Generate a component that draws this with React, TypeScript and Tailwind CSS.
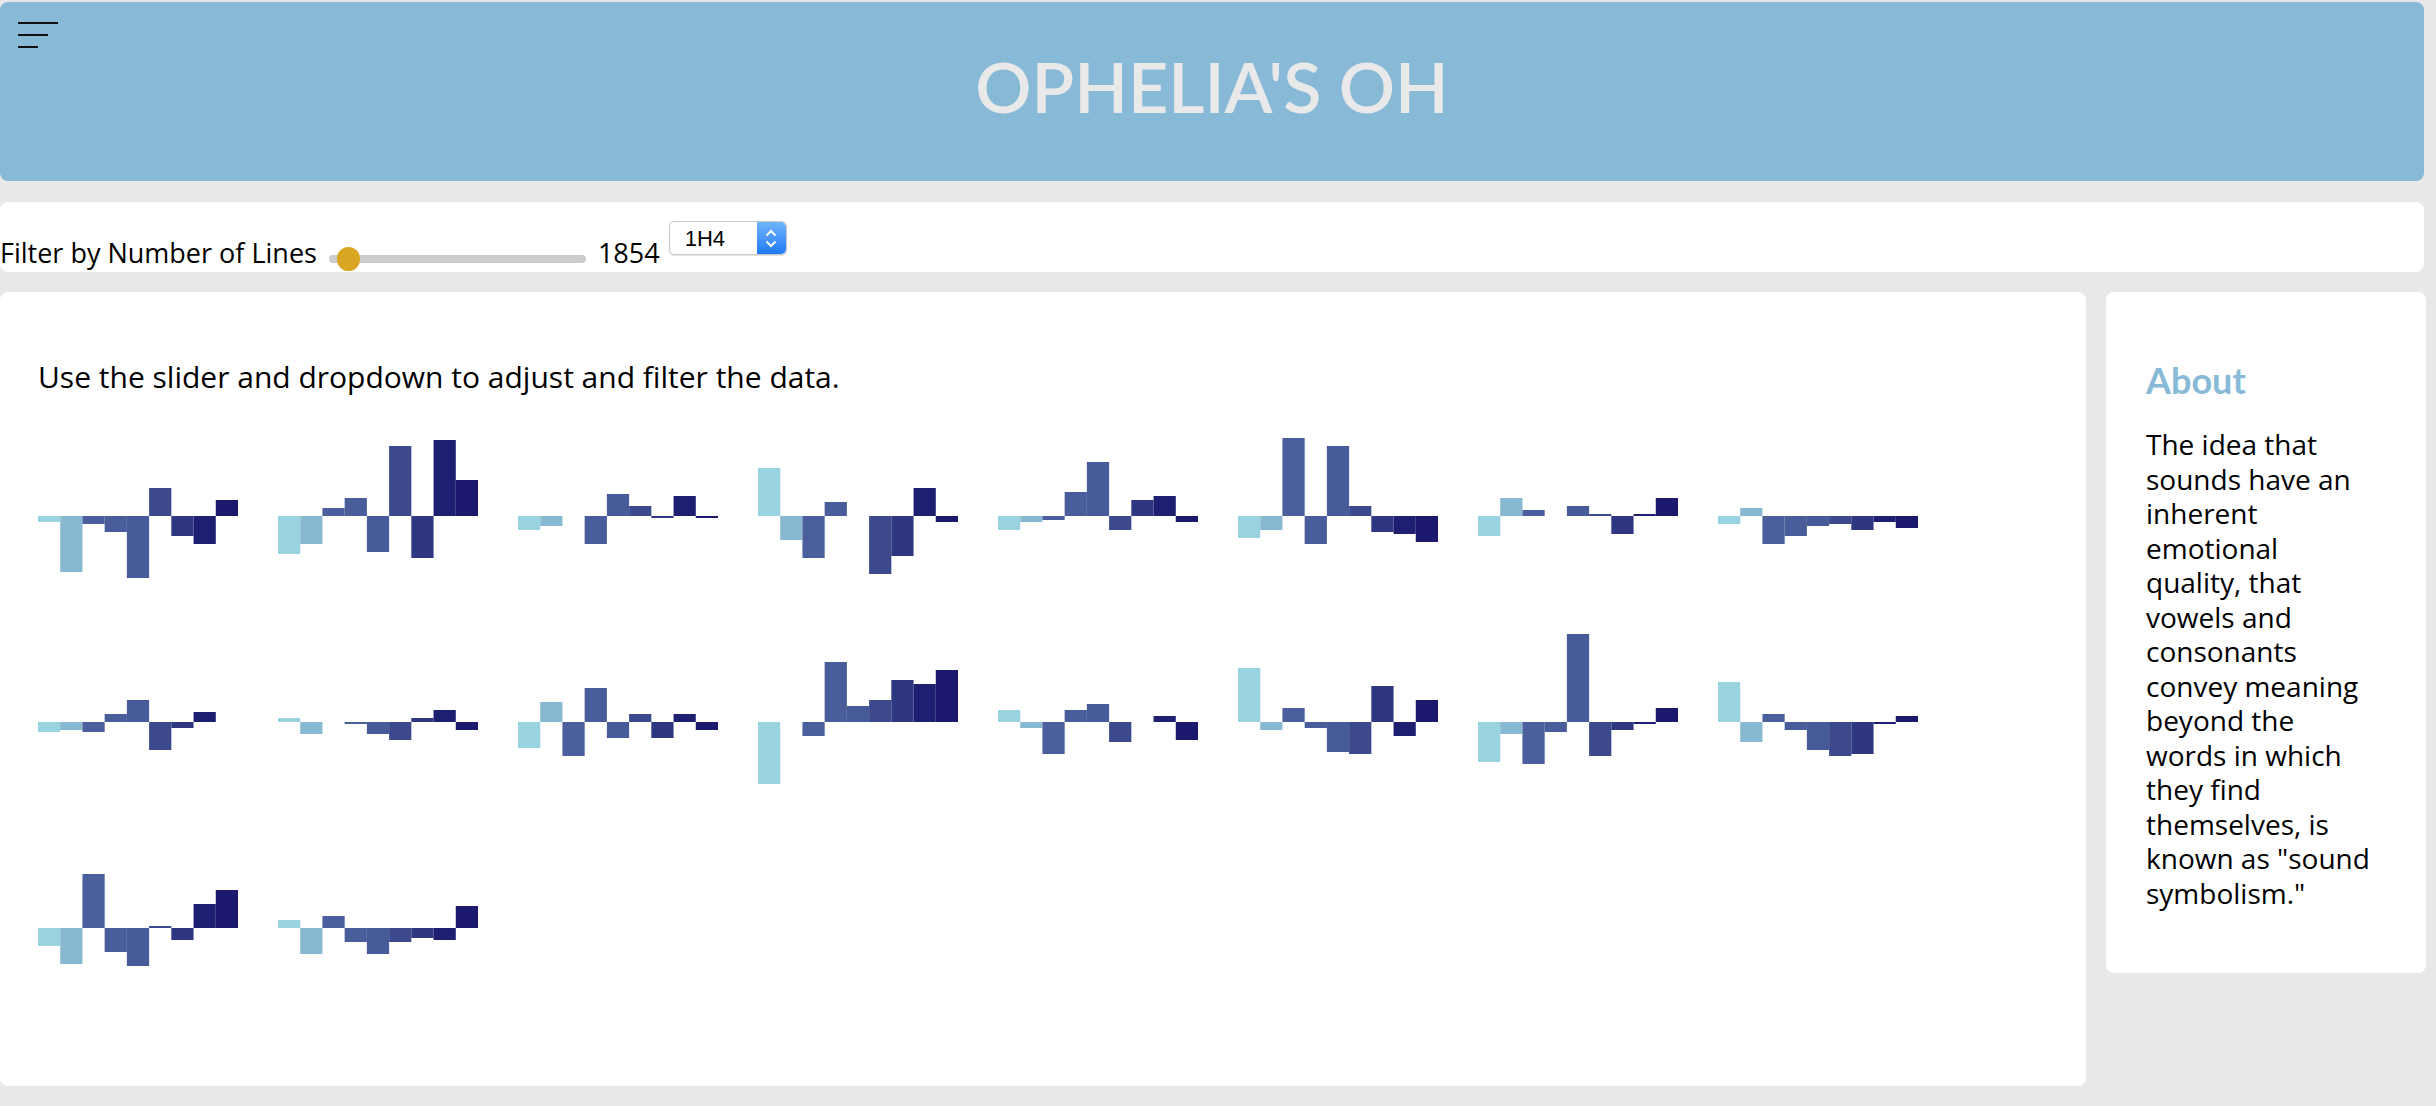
import React from 'react';

// bar heights in px, positive = above the zero line
const charts: number[][] = [
  [-6, -56, -8, -16, -62, 28, -20, -28, 16],
  [-38, -28, 8, 18, -36, 70, -42, 76, 36],
  [-14, -10, 0, -28, 22, 10, -2, 20, -2],
  [48, -24, -42, 14, 0, -58, -40, 28, -6],
  [-14, -6, -4, 24, 54, -14, 16, 20, -6],
  [-22, -14, 78, -28, 70, 10, -16, -18, -26],
  [-20, 18, 6, 0, 10, 2, -18, 2, 18],
  [-8, 8, -28, -20, -10, -8, -14, -6, -12],
  [-10, -8, -10, 8, 22, -28, -6, 10, 0],
  [4, -12, 0, -2, -12, -18, 4, 12, -8],
  [-26, 20, -34, 34, -16, 8, -16, 8, -8],
  [-62, 0, -14, 60, 16, 22, 42, 38, 52],
  [12, -6, -32, 12, 18, -20, 0, 6, -18],
  [54, -8, 14, -6, -30, -32, 36, -14, 22],
  [-40, -12, -42, -10, 88, -34, -8, -2, 14],
  [40, -20, 8, -8, -28, -34, -32, -2, 6],
  [-18, -36, 54, -24, -38, 2, -12, 24, 38],
  [8, -26, 12, -14, -26, -14, -10, -12, 22],
];

const colors = ['#99d3df', '#88b8d2', '#4a5f9b', '#485d99', '#475b98', '#3c4a8b', '#2f3783', '#1f1f72', '#1b186e'];

const BarChart = ({ values }: { values: number[] }) => {
  const w = 200 / values.length;
  return (
    <svg width={200} height={200} className="block">
      {values.map((v, i) => (
        <rect
          key={i}
          x={i * w}
          y={v > 0 ? 100 - v : 100}
          width={w}
          height={Math.abs(v)}
          fill={colors[i]}
        />
      ))}
    </svg>
  );
};

const SelectArrows = () => (
  <div className="flex h-full w-[29px] flex-col items-center justify-center gap-[3px] rounded-r-[5px] bg-gradient-to-b from-[#6fb4fb] to-[#1c7af5]">
    <svg width="12" height="8" viewBox="0 0 12 8" fill="none" stroke="white" strokeWidth="2">
      <path d="M1.5 6.5 L6 2 L10.5 6.5" />
    </svg>
    <svg width="12" height="8" viewBox="0 0 12 8" fill="none" stroke="white" strokeWidth="2">
      <path d="M1.5 1.5 L6 6 L10.5 1.5" />
    </svg>
  </div>
);

export default function App() {
  return (
    <div className="min-h-screen bg-[#e8e8e8] pt-[2px] pr-[10px] font-[family-name:'Open_Sans',sans-serif] text-black">
      <header className="relative mr-[2px] flex h-[179px] items-center justify-center rounded-[8px] bg-[#88bad7]">
        <button className="absolute left-[18px] top-[20px] flex flex-col gap-[10px]">
          <span className="block h-[2px] w-[40px] bg-[#111]" />
          <span className="block h-[2px] w-[30px] bg-[#111]" />
          <span className="block h-[2px] w-[20px] bg-[#111]" />
        </button>
        <h1 className="mb-[11px] font-[family-name:Lato,sans-serif] text-[70px] font-semibold leading-none text-[#e9e9e9]">
          OPHELIA'S OH
        </h1>
      </header>

      <div className="mr-[2px] mt-[21px] flex h-[70px] items-end rounded-[8px] bg-white">
        <span className="mb-[4px] text-[27px] leading-[30px]">Filter by Number of Lines</span>
        <div className="relative mb-[1px] ml-[12px] flex h-[24px] w-[257px] items-center">
          <div className="h-[8px] w-full rounded-full bg-[#cccccc]" />
          <div className="absolute left-[8px] top-0 h-[24px] w-[23px] rounded-full bg-[#daa520]" />
        </div>
        <span className="mb-[4px] ml-[12px] text-[27px] leading-[30px]">1854</span>
        <div className="mb-[17px] ml-[9px] flex h-[34px] w-[118px] items-center rounded-[5px] border border-[#c9c9c9] bg-white shadow-[0_1px_1px_rgba(0,0,0,0.12)]">
          <span className="flex-1 pl-[15px] font-[family-name:'Liberation_Sans',sans-serif] text-[22px]">1H4</span>
          <SelectArrows />
        </div>
      </div>

      <div className="mt-[20px] flex items-start gap-[20px]">
        <main className="h-[794px] w-[2086px] shrink-0 rounded-[8px] bg-white pl-[38px] pr-[38px] pt-[65px]">
          <p className="text-[30px] leading-[40px]">Use the slider and dropdown to adjust and filter the data.</p>
          <div className="mt-[19px] flex flex-wrap gap-x-[40px] gap-y-[6px]">
            {charts.map((c, i) => (
              <BarChart key={i} values={c} />
            ))}
          </div>
        </main>

        <aside className="h-[681px] w-[320px] shrink-0 rounded-[8px] bg-white pl-[40px] pr-[50px] pt-[66px]">
          <h2 className="font-[family-name:Lato,sans-serif] text-[36px] font-bold leading-[44px] text-[#88bad7]">About</h2>
          <p className="mt-[25px] text-[28px] leading-[34.5px]">
            The idea that sounds have an inherent emotional quality, that vowels and consonants convey meaning beyond the words in which they find themselves, is known as "sound symbolism."
          </p>
        </aside>
      </div>
    </div>
  );
}
